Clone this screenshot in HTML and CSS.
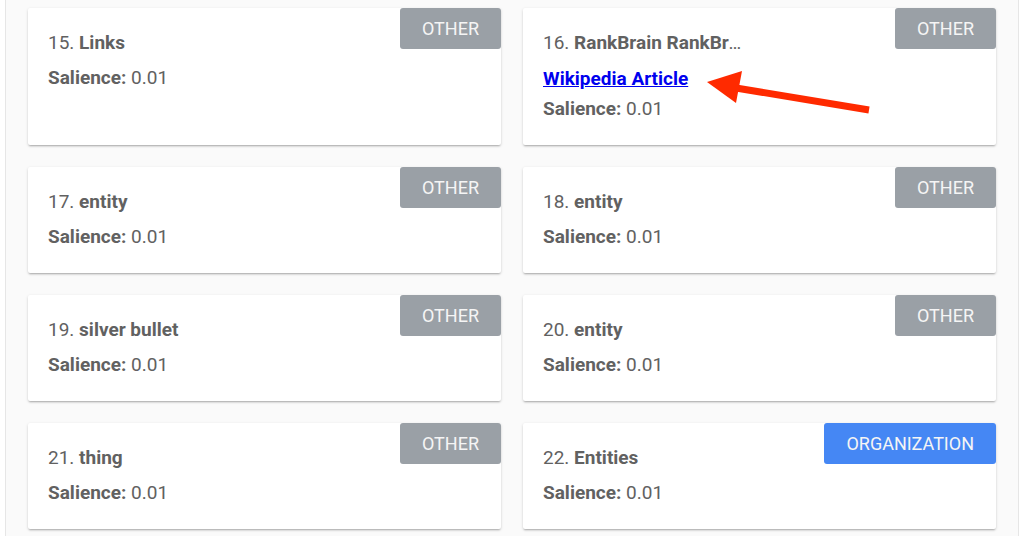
FILE: index.html
```html
<!DOCTYPE html>
<html lang="en">
<head>
<meta charset="utf-8">
<title>Entities</title>
<link rel="stylesheet" href="styles.css">
</head>
<body>
<div class="page">
  <div class="grid">
    <div class="card">
      <span class="badge">Other</span>
      <div class="title">15. <b>Links</b></div>
      <div class="salience"><b>Salience:</b> 0.01</div>
    </div>
    <div class="card">
      <span class="badge">Other</span>
      <div class="title">16. <b>RankBrain RankBrain</b></div>
      <a class="wiki" href="#">Wikipedia Article</a>
      <div class="salience tight"><b>Salience:</b> 0.01</div>
    </div>
    <div class="card">
      <span class="badge">Other</span>
      <div class="title">17. <b>entity</b></div>
      <div class="salience"><b>Salience:</b> 0.01</div>
    </div>
    <div class="card">
      <span class="badge">Other</span>
      <div class="title">18. <b>entity</b></div>
      <div class="salience"><b>Salience:</b> 0.01</div>
    </div>
    <div class="card">
      <span class="badge">Other</span>
      <div class="title">19. <b>silver bullet</b></div>
      <div class="salience"><b>Salience:</b> 0.01</div>
    </div>
    <div class="card">
      <span class="badge">Other</span>
      <div class="title">20. <b>entity</b></div>
      <div class="salience"><b>Salience:</b> 0.01</div>
    </div>
    <div class="card">
      <span class="badge">Other</span>
      <div class="title">21. <b>thing</b></div>
      <div class="salience"><b>Salience:</b> 0.01</div>
    </div>
    <div class="card">
      <span class="badge badge-org">Organization</span>
      <div class="title">22. <b>Entities</b></div>
      <div class="salience"><b>Salience:</b> 0.01</div>
    </div>
  </div>
  <svg class="annotation" viewBox="0 0 1024 536" width="1024" height="536" aria-hidden="true">
    <line x1="736" y1="88" x2="869" y2="110" stroke="#ff2a00" stroke-width="7"/>
    <polygon points="707,82 742,71 736,103" fill="#ff2a00"/>
  </svg>
</div>
</body>
</html>
```
FILE: styles.css
```css
html, body {
  margin: 0;
  padding: 0;
  background: #ffffff;
  overflow: hidden;
}

.page {
  position: relative;
  margin-left: 5px;
  width: 1014px;
  height: 536px;
  box-sizing: border-box;
  background: #fafafa;
  border-left: 1px solid #e6e6e6;
  border-right: 1px solid #e6e6e6;
  padding: 8px 22px 0 22px;
  font-family: Roboto, "Liberation Sans", Arial, sans-serif;
  color: #616161;
}

.grid {
  display: grid;
  grid-template-columns: 1fr 1fr;
  column-gap: 22px;
  row-gap: 21px;
}

.card {
  position: relative;
  background: #ffffff;
  border-radius: 2px;
  padding: 21px 20px 22px 20px;
  box-shadow: 0 1px 3px rgba(0,0,0,0.16), 0 2px 2px -1px rgba(0,0,0,0.22);
  font-size: 19px;
}

.card:nth-child(n+3) {
  margin-top: 1px;
}

.title {
  line-height: 28px;
  max-width: 205px;
  white-space: nowrap;
  overflow: hidden;
  text-overflow: ellipsis;
}

.title b, .salience b {
  font-weight: 700;
}

.salience {
  line-height: 28px;
  margin-top: 7px;
}

.salience.tight {
  margin-top: 4px;
}

.wiki {
  display: block;
  width: max-content;
  margin-top: 10px;
  line-height: 24px;
  color: #0000ee;
  font-weight: 700;
  text-decoration: underline;
}

.badge {
  position: absolute;
  top: 0;
  right: 0;
  padding: 0 22px;
  line-height: 41px;
  font-size: 18px;
  text-transform: uppercase;
  color: #f5f5f5;
  background: #9aa0a6;
  border-radius: 3px;
}

.badge-org {
  background: #4587f4;
}

.annotation {
  position: absolute;
  top: 0;
  left: -6px;
  pointer-events: none;
}
```
